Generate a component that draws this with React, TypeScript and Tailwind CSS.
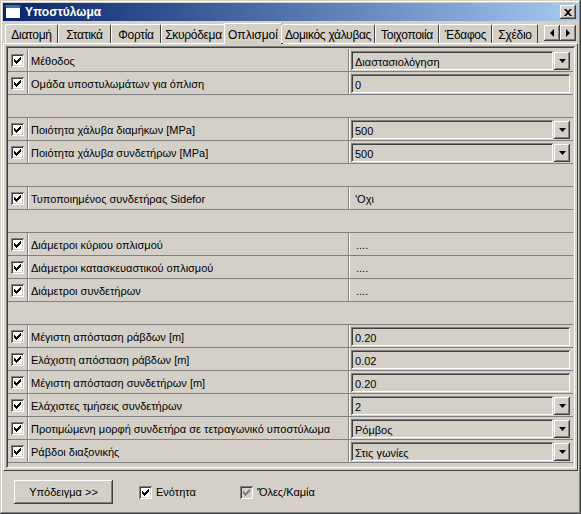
import React from 'react';

type Row =
  | null
  | { label: string; kind: 'select' | 'text' | 'plain' | 'dots'; value: string };

const rows: Row[] = [
  { label: 'Μέθοδος', kind: 'select', value: 'Διαστασιολόγηση' },
  { label: 'Ομάδα υποστυλωμάτων για όπλιση', kind: 'text', value: '0' },
  null,
  { label: 'Ποιότητα χάλυβα διαμήκων [MPa]', kind: 'select', value: '500' },
  { label: 'Ποιότητα χάλυβα συνδετήρων [MPa]', kind: 'select', value: '500' },
  null,
  { label: 'Τυποποιημένος συνδετήρας Sidefor', kind: 'plain', value: "'Οχι" },
  null,
  { label: 'Διάμετροι κύριου οπλισμού', kind: 'dots', value: '....' },
  { label: 'Διάμετροι κατασκευαστικού οπλισμού', kind: 'dots', value: '....' },
  { label: 'Διάμετροι συνδετήρων', kind: 'dots', value: '....' },
  null,
  { label: 'Μέγιστη απόσταση ράβδων [m]', kind: 'text', value: '0.20' },
  { label: 'Ελάχιστη απόσταση ράβδων [m]', kind: 'text', value: '0.02' },
  { label: 'Μέγιστη απόσταση συνδετήρων [m]', kind: 'text', value: '0.20' },
  { label: 'Ελάχιστες τμήσεις συνδετήρων', kind: 'select', value: '2' },
  { label: 'Προτιμώμενη μορφή συνδετήρα σε τετραγωνικό υποστύλωμα', kind: 'select', value: 'Ρόμβος' },
  { label: 'Ράβδοι διαξονικής', kind: 'select', value: 'Στις γωνίες' },
];

const tabs = [
  { name: 'Διατομή', w: 'w-[53px]' },
  { name: 'Στατικά', w: 'w-[53px]' },
  { name: 'Φορτία', w: 'w-[50px]' },
  { name: 'Σκυρόδεμα', w: 'w-[65px]' },
  { name: 'Οπλισμοί', w: 'w-[59px]', active: true },
  { name: 'Δομικός χάλυβας', w: 'w-[94px]' },
  { name: 'Τοιχοποιία', w: 'w-[64px]' },
  { name: 'Έδαφος', w: 'w-[53px]' },
  { name: 'Σχέδιο', w: 'w-[46px]' },
];

const sunken =
  'shadow-[inset_1px_1px_#808080,inset_-1px_-1px_#ffffff,inset_2px_2px_#404040,inset_-2px_-2px_#d4d0c8]';
const raised =
  'shadow-[inset_-1px_-1px_#404040,inset_1px_1px_#ffffff,inset_-2px_-2px_#808080,inset_2px_2px_#d4d0c8]';

function Check({ disabled }: { disabled?: boolean }) {
  return (
    <div
      className={`w-[13px] h-[13px] shrink-0 flex items-center justify-center ${sunken} ${
        disabled ? 'bg-[#d4d0c8]' : 'bg-white'
      }`}
    >
      <svg width="7" height="7" viewBox="0 0 7 7">
        <path
          d="M0 2h1v1h1v1h1V3h1V2h1V1h1V0h1v3H6v1H5v1H4v1H3v1H2V6H1V5H0z"
          fill={disabled ? '#808080' : '#000'}
        />
      </svg>
    </div>
  );
}

function DownArrow() {
  return (
    <div className={`w-[16px] h-[18px] bg-[#d4d0c8] flex items-center justify-center ${raised}`}>
      <svg width="7" height="4" viewBox="0 0 7 4">
        <path d="M0 0h7L3.5 4z" fill="#000" />
      </svg>
    </div>
  );
}

function Value({ row }: { row: NonNullable<Row> }) {
  if (row.kind === 'select') {
    return (
      <div className="flex items-center h-full pl-[1px] pr-[3px] pt-[1px] gap-[1px]">
        <div className={`flex-1 h-[19px] flex items-center pl-[4px] pt-[3px] ${sunken}`}>{row.value}</div>
        <DownArrow />
      </div>
    );
  }
  if (row.kind === 'text') {
    return (
      <div className="flex items-center h-full pl-[1px] pr-[3px] pt-[1px]">
        <div className={`flex-1 h-[19px] flex items-center pl-[4px] pt-[3px] ${sunken}`}>{row.value}</div>
      </div>
    );
  }
  if (row.kind === 'dots') {
    return <div className="flex items-end h-full pl-[6px] pb-[2px]">{row.value}</div>;
  }
  return <div className="flex items-center h-full pl-[5px] pt-[3px]">{row.value}</div>;
}

export default function App() {
  return (
    <div
      className="w-[581px] h-[514px] bg-[#d4d0c8] p-[3px] flex flex-col text-[11px] text-black shadow-[inset_-1px_-1px_#404040,inset_1px_1px_#d4d0c8,inset_-2px_-2px_#808080,inset_2px_2px_#ffffff]"
      style={{ fontFamily: '"Liberation Sans", Arial, sans-serif' }}
    >
      {/* title bar */}
      <div className="h-[18px] shrink-0 bg-linear-to-r from-[#0a246a] to-[#a6caf0] flex items-center pl-[2px] pr-[2px]">
        <div className="w-[16px] h-[14px] bg-white border border-[#0a246a] border-t-[3px] border-t-[#3a6ea5] mr-[4px]" />
        <span className="text-white font-bold text-[12px] flex-1">Υποστύλωμα</span>
        <div className={`w-[16px] h-[14px] bg-[#d4d0c8] flex items-center justify-center ${raised}`}>
          <svg width="8" height="7" viewBox="0 0 8 7">
            <path d="M0 0h2l2 2 2-2h2L5 3.5 8 7H6L4 5 2 7H0l3-3.5z" fill="#000" />
          </svg>
        </div>
      </div>

      {/* tabs */}
      <div className="h-[22px] shrink-0 flex items-end pl-[2px] relative z-10">
        {tabs.map((t) =>
          t.active ? (
            <div
              key={t.name}
              className={`${t.w} h-[21px] -mb-[1px] -mx-[2px] bg-[#d4d0c8] border-t border-l border-white border-r-2 border-r-[#404040] rounded-t-[2px] flex items-start justify-center pt-[2px] text-[12px]`}
            >
              {t.name}
            </div>
          ) : (
            <div
              key={t.name}
              className={`${t.w} h-[19px] bg-[#d4d0c8] border-t border-l border-white border-r border-r-[#404040] rounded-t-[2px] flex items-center justify-center pt-[1px] text-[12px] tracking-[-0.3px]`}
            >
              {t.name}
            </div>
          )
        )}
        <div className="ml-auto flex mb-[2px] mr-[2px]">
          {['M5 0v8L1 4z', 'M1 0v8l4-4z'].map((d) => (
            <div key={d} className={`w-[16px] h-[16px] bg-[#d4d0c8] flex items-center justify-center ${raised}`}>
              <svg width="6" height="8" viewBox="0 0 6 8">
                <path d={d} fill="#000" />
              </svg>
            </div>
          ))}
        </div>
      </div>

      {/* tab panel */}
      <div className="h-[428px] shrink-0 border-t border-l border-white border-r border-b border-r-[#404040] border-b-[#404040] p-[2px]">
        <div className={`h-full w-full p-[2px] pt-[3px] ${sunken}`}>
          <div className="flex flex-col">
            {rows.map((r, i) =>
              r === null ? (
                <div key={i} className="h-[23px] border-b border-[#808080]" />
              ) : (
                <div key={i} className="h-[23px] flex border-b border-[#808080]">
                  <div className="w-[20px] flex items-center justify-center border-r border-[#808080]">
                    <Check />
                  </div>
                  <div className="w-[321px] flex items-center pl-[2px] pt-[3px] border-l border-white border-r border-r-[#808080] whitespace-nowrap overflow-hidden">
                    {r.label}
                  </div>
                  <div className="flex-1 border-l border-white">
                    <Value row={r} />
                  </div>
                </div>
              )
            )}
          </div>
        </div>
      </div>

      {/* bottom */}
      <div className="flex-1 flex items-center pl-[11px] pt-[2px]">
        <div className={`w-[99px] h-[24px] flex items-center justify-center ${raised}`}>Υπόδειγμα &gt;&gt;</div>
        <div className="flex items-center ml-[26px] gap-[4px]">
          <Check />
          <span>Ενότητα</span>
        </div>
        <div className="flex items-center ml-[44px] gap-[4px]">
          <Check disabled />
          <span>'Όλες/Καμία</span>
        </div>
      </div>
    </div>
  );
}
